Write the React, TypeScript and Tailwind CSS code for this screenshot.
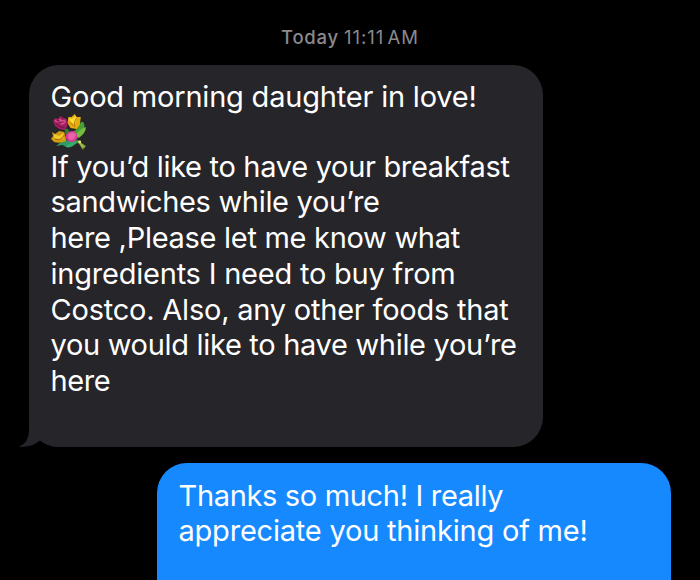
type Line = { text: string; tracking: string };

const request: Line[] = [
  { text: "If you’d like to have your breakfast", tracking: "tracking-[-0.31px]" },
  { text: "sandwiches while you’re", tracking: "tracking-[-0.31px]" },
  { text: "here ,Please let me know what", tracking: "tracking-[-0.29px]" },
  { text: "ingredients I need to buy from", tracking: "tracking-[-0.22px]" },
  { text: "Costco. Also, any other foods that", tracking: "tracking-[-0.22px]" },
  { text: "you would like to have while you’re", tracking: "tracking-[-0.31px]" },
  { text: "here", tracking: "tracking-[-0.4px]" },
];

const reply: Line[] = [
  { text: "Thanks so much! I really", tracking: "tracking-[-0.33px]" },
  { text: "appreciate you thinking of me!", tracking: "tracking-[-0.21px]" },
];

function TextLine({ text, tracking }: Line) {
  return <p className={`whitespace-nowrap ${tracking}`}>{text}</p>;
}

function Bouquet() {
  return (
    <svg viewBox="0 0 36 36" className="-mt-px h-9 w-[37px]" preserveAspectRatio="none" aria-label="Bouquet">
      <path d="M13 15 Q17 13 19 20 L28 28 L25 30 L15 24Z" fill="#2d7d30" />
      <path d="M21 18 Q26 15 28 10 Q30 6 32 9 Q34 14 30 18 L25 25Z" fill="#459f35" />
      <path d="M24 21 Q28 15 34 13 Q34 19 27 24Z" fill="#75bd40" />
      <path d="M5 32 Q10 26 20 26 L26 28 Q18 29 15 33 L11 31Z" fill="#2b9a65" />
      <path d="M14 33 Q17 28 26 27 Q21 35 14 33Z" fill="#35ac70" />
      <path d="M25 26 L34 32 L31 36 L26 28" fill="#668d31" />
      <path d="M26 27 L33 33 M27 27 L31 34" stroke="#a4bc4f" strokeWidth="1.2" fill="none" />
      <path d="M2 7 L4 4 L7 5 L9 2 L12 4 L15 5 L16 12 L13 16 L8 15 L4 12Z" fill="#a31f61" />
      <path d="M4 6 Q6 10 10 6 M8 5 L11 7 L14 6 M9 10 Q13 10 14 7" stroke="#d75690" strokeWidth="1.2" fill="none" />
      <path d="M5 9 Q8 14 13 13 M6 6 L9 9" stroke="#741343" strokeWidth="1" fill="none" />
      <path d="M17 3 L20 3 L23 0 L25 3 L29 3 L28 11 L25 15 L19 14 L16 9Z" fill="#e5ad12" />
      <path d="M17 4 Q19 9 23 10 Q26 6 24 2 L20 5Z" fill="#ffdb35" />
      <path d="M25 4 Q22 8 23 13 M18 8 L22 12" stroke="#c58208" fill="none" />
      <path d="M1 18 L4 20 L8 17 L13 18 L15 27 Q9 30 3 28 L0 25 L2 22Z" fill="#d29b11" />
      <path d="M3 20 L8 22 L12 19 L13 24 Q8 27 3 24Z" fill="#f2c82b" />
      <path d="M4 25 Q10 27 13 21" stroke="#ad6e10" fill="none" />
      <path d="M15 20 Q19 15 24 18 Q28 24 22 28 Q16 29 14 23Z" fill="#d83d93" />
      <path d="M17 20 Q21 17 24 20 Q24 25 20 26 Q16 26 17 20Z" fill="#eb62ac" />
      <circle cx="28" cy="28" r="1.4" fill="#e5e966" />
    </svg>
  );
}

export default function App() {
  return (
    <main className="h-[580px] w-[700px] overflow-hidden bg-black font-['Inter',sans-serif] text-white">
      <div className="flex justify-center gap-[5px] pt-[26px] text-[18.5px] leading-[22px] text-[#8a8a8e]">
        <span className="font-medium tracking-[0.75px]">Today</span>
        <span className="tracking-[1px] [word-spacing:-3px]">11:11 AM</span>
      </div>
      <section className="relative ml-[29px] mt-[17px] h-[382px] w-[514px] rounded-[30px] bg-[#262529] pl-[21.5px] pt-[14px] text-[29px] leading-[35.7px]">
        <TextLine text="Good morning daughter in love!" tracking="tracking-[-0.2px]" />
        <div className="h-[35px]">
          <Bouquet />
        </div>
        {request.map((line) => <TextLine key={line.text} {...line} />)}
        <svg viewBox="0 0 40 32" className="absolute -left-[10px] bottom-0 h-8 w-10" aria-hidden="true">
          <path d="M10 0V15Q10 28 0 31.5Q12 33 21 25.5Q29 32 40 32V0Z" fill="#262529" />
        </svg>
      </section>
      <section className="ml-[157px] mt-4 h-[150px] w-[514px] rounded-[30px] bg-[#1689ff] pl-[21.5px] pt-[14.5px] text-[29px] leading-[35.5px]">
        {reply.map((line) => <TextLine key={line.text} {...line} />)}
      </section>
    </main>
  );
}
